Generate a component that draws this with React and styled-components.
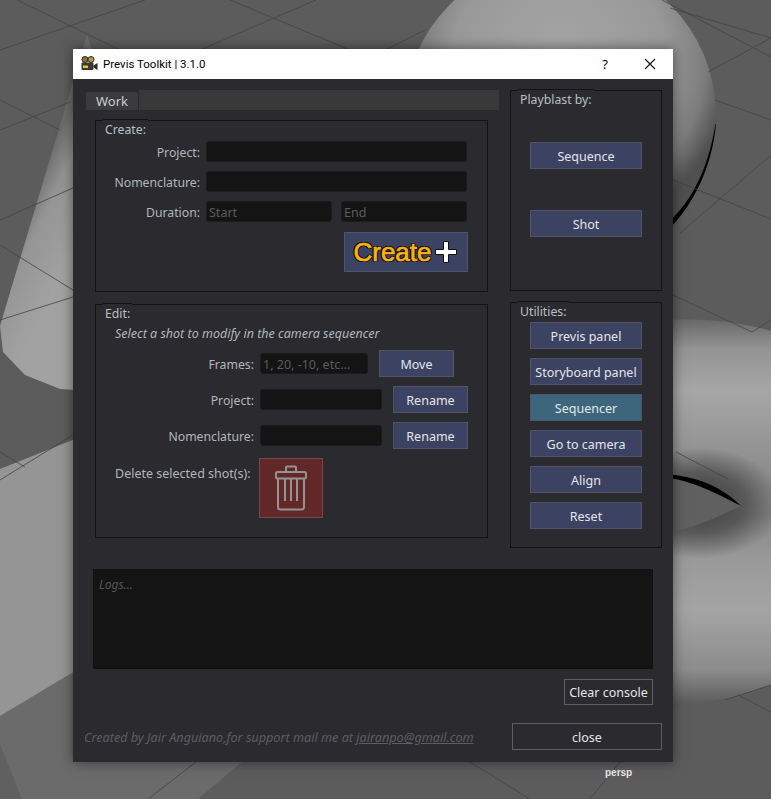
import React from "react";
import styled, { createGlobalStyle } from "styled-components";

const Global = createGlobalStyle`
  html, body { margin: 0; padding: 0; background: #5c5c5c; overflow: hidden; }
  * { box-sizing: border-box; }
`;

const UI_FONT = `"Noto Sans", "Open Sans", "DejaVu Sans", sans-serif`;

const Viewport = styled.div`
  position: relative;
  width: 771px;
  height: 799px;
  overflow: hidden;
  font-family: ${UI_FONT};
  font-size: 12.5px;
`;
const Scene = styled.svg`
  position: absolute;
  inset: 0;
`;
const Persp = styled.span`
  position: absolute;
  left: 605px;
  top: 767px;
  color: #e8e8e8;
  font: bold 10px "Liberation Sans", sans-serif;
`;
const Dialog = styled.div`
  position: absolute;
  left: 73px;
  top: 49px;
  width: 600px;
  height: 713px;
  display: flex;
  flex-direction: column;
  background: #2a2a2f;
  box-shadow: 0 0 12px rgba(0, 0, 0, 0.5);
`;
const TitleBar = styled.header`
  height: 30px;
  flex: none;
  background: #fff;
  display: flex;
  align-items: center;
  padding: 0 0 1px 8px;
  color: #000;
  font-family: Roboto, sans-serif;
  font-size: 11.5px;
`;
const TitleText = styled.span`
  margin-left: 5px;
  flex: 1;
`;
const TitleHelp = styled.span`
  width: 44px;
  text-align: center;
  font-family: ${UI_FONT};
  font-size: 13px;
`;
const TitleClose = styled.span`
  width: 46px;
  display: flex;
  justify-content: center;
`;
const Main = styled.div`
  display: flex;
  padding: 11px 0 0 13px;
  align-items: flex-start;
`;
const LeftCol = styled.div`
  width: 413px;
  flex: none;
`;
const RightCol = styled.div`
  width: 152px;
  margin-left: 11px;
  display: flex;
  flex-direction: column;
  gap: 11px;
`;
const TabBar = styled.div`
  height: 20px;
  display: flex;
  align-items: flex-end;
  background: #39393a;
  box-shadow: inset 53px 0 0 #2a2a2f;
`;
const Tab = styled.div`
  width: 52px;
  height: 18px;
  background: #3b3b3d;
  border-radius: 2px 2px 0 0;
  color: #c6ced2;
  font-size: 13px;
  line-height: 18px;
  padding-left: 10px;
`;
const TabPanel = styled.div`
  padding: 10px 11px 0 9px;
  display: flex;
  flex-direction: column;
  gap: 12px;
`;
const Group = styled.section`
  position: relative;
  height: ${(p) => p.$h}px;
  border: 1px solid #141416;
  padding: ${(p) => p.$pad};
  display: flex;
  flex-direction: column;
  align-items: ${(p) => p.$align || "stretch"};
  gap: ${(p) => p.$gap ?? 9}px;
`;
const GroupTitle = styled.span`
  position: absolute;
  left: 7px;
  top: -2px;
  height: 18px;
  padding: 0 2px;
  border-top: 1px solid #141416;
  background: #2a2a2f;
  color: #b8c0c4;
  font-size: 12.25px;
  line-height: 19px;
`;
const Row = styled.div`
  display: flex;
  align-items: ${(p) => p.$align || "center"};
  gap: ${(p) => p.$gap ?? 6}px;
  min-height: ${(p) => p.$min || 21}px;
`;
const Label = styled.label`
  width: ${(p) => p.$w}px;
  flex: none;
  padding-top: 1px;
  text-align: right;
  color: #b0b8bc;
  font-size: 12.25px;
`;
const Field = styled.input`
  flex: ${(p) => (p.$w ? "none" : "1 1 0")};
  width: ${(p) => (p.$w ? `${p.$w}px` : "0")};
  min-width: 0;
  height: 21px;
  background: #141414;
  border: 1px solid #1b1b1d;
  border-radius: 3px;
  padding: 1px 2px 0;
  font-family: ${UI_FONT};
  font-size: 12.5px;
  color: #ccc;
  outline: none;
  &::placeholder { color: #5c5c5c; opacity: 1; }
`;
const Pair = styled.div`
  flex: 1 1 0;
  min-width: 0;
  display: flex;
  gap: 9px;
`;
const Btn = styled.button`
  width: ${(p) => p.$w || 112}px;
  height: 27px;
  flex: none;
  padding: 1px 0 0;
  margin-left: ${(p) => p.$ml || 0}px;
  background: ${(p) => (p.$teal ? "#3c667c" : "#3b4262")};
  border: 1px solid #50546a;
  color: #e4e6ea;
  font-family: ${UI_FONT};
  font-size: 12.5px;
`;
const GhostBtn = styled.button`
  width: ${(p) => p.$w}px;
  height: ${(p) => p.$h || 27}px;
  padding: ${(p) => (p.$h ? 0 : "1px 0 0")};
  background: transparent;
  border: 1px solid #5e5e62;
  color: #e4e6ea;
  font-family: ${UI_FONT};
  font-size: 12.5px;
`;
const CreateRow = styled.div`
  display: flex;
  justify-content: flex-end;
  margin: 1px -1px 0 0;
`;
const CreateBtn = styled.button`
  width: 124px;
  height: 40px;
  padding: 0 2px 0 0;
  display: flex;
  align-items: center;
  justify-content: center;
  gap: 3px;
  background: #3b4262;
  border: 1px solid #50546a;
  color: #fdb30f;
  font: 400 26px "Liberation Sans", sans-serif;
  -webkit-text-stroke: 0.7px #fdb30f;
  text-shadow: -1.4px 0 #111, 1.4px 0 #111, 0 -1.4px #111, 0 1.4px #111, -1px -1px #111, 1px 1px #111, -1px 1px #111, 1px -1px #111;
`;
const Hint = styled.div`
  height: 18px;
  padding: 1px 0 0 19px;
  margin-bottom: -1px;
  font-style: italic;
  color: #b0b8bc;
  font-size: 12.5px;
  line-height: 18px;
`;
const DeleteLabel = styled.span`
  width: 163px;
  flex: none;
  padding: 7px 0 0 19px;
  color: #b0b8bc;
  font-size: 12.5px;
`;
const TrashBtn = styled.button`
  width: 64px;
  height: 60px;
  padding: 0;
  display: flex;
  align-items: center;
  justify-content: center;
  background: #622828;
  border: 1px solid #70494b;
`;
const Logs = styled.textarea`
  display: block;
  width: 560px;
  height: 100px;
  margin: 21px 0 0 20px;
  resize: none;
  background: #141414;
  border: 1px solid #111;
  padding: 6px 5px;
  outline: none;
  font-family: ${UI_FONT};
  font-size: 12px;
  font-style: italic;
  &::placeholder { color: #565656; opacity: 1; }
`;
const ClearRow = styled.div`
  display: flex;
  justify-content: flex-end;
  margin: 10px 20px 0 0;
  height: 27px;
`;
const Footer = styled.footer`
  display: flex;
  align-items: center;
  justify-content: space-between;
  margin-top: 17px;
  padding: 0 11px;
`;
const Credit = styled.span`
  padding-top: 1px;
  font-style: italic;
  color: #5e5e60;
  font-size: 12.65px;
`;
const Mail = styled.a`
  color: #5e5e60;
  text-decoration: underline;
`;

const CameraIcon = () => (
  <svg width="17" height="15" viewBox="0 0 17 15">
    <circle cx="4" cy="3.5" r="3" fill="#8a7434" stroke="#2a2a20" strokeWidth="1" />
    <circle cx="10" cy="3.5" r="3" fill="#b39a45" stroke="#2a2a20" strokeWidth="1" />
    <rect x="0.5" y="6.5" width="12" height="7.5" rx="1" fill="#3a3a34" />
    <rect x="2" y="9.5" width="5" height="2.5" fill="#f2c230" />
    <path d="M12.5 9.5 L16.5 7 V14 L12.5 11.5 Z" fill="#2a2a2a" />
  </svg>
);
const CloseIcon = () => (
  <svg width="12" height="12" viewBox="0 0 12 12">
    <path d="M1 1 L11 11 M11 1 L1 11" stroke="#111" strokeWidth="1.1" />
  </svg>
);
const PlusIcon = () => (
  <svg width="22" height="22" viewBox="0 0 22 22">
    <path d="M8.5 0.5 H13.5 V8.5 H21.5 V13.5 H13.5 V21.5 H8.5 V13.5 H0.5 V8.5 H8.5 Z" fill="#fff" stroke="#111" strokeWidth="1" strokeLinejoin="round" />
  </svg>
);
const TrashIcon = () => (
  <svg width="34" height="46" viewBox="0 0 34 46" fill="none" stroke="#949494" strokeWidth="2">
    <path d="M12 7 V2.5 Q12 1.5 13 1.5 H21 Q22 1.5 22 2.5 V7" />
    <rect x="2" y="7" width="30" height="6.5" rx="1.5" />
    <path d="M4 13.5 V42 Q4 44.5 6.5 44.5 H27.5 Q30 44.5 30 42 V13.5" />
    <path d="M11 13.5 V36 M17 13.5 V36 M23 13.5 V36" />
  </svg>
);

const GRID = [
  "M17 0 L120 50", "M0 50 L145 0", "M230 0 L350 50", "M200 50 L316 0", "M385 50 L425 30",
  "M662 0 L771 57", "M670 8 L771 38", "M708 72 L771 38", "M715 100 L771 120",
  "M673 180 L771 219", "M680 233 L771 155", "M673 295 L752 332 L771 320",
  "M0 100 L60 130", "M0 130 L70 102", "M0 220 L73 188", "M0 245 L73 290", "M0 320 L73 297",
  "M0 480 L73 435", "M0 452 L25 467", "M196 762 L148 799", "M470 762 L530 799", "M620 762 L590 799",
];

const Background = () => (
  <Scene width="771" height="799" viewBox="0 0 771 799">
    <defs>
      <radialGradient id="sph" gradientUnits="userSpaceOnUse" cx="560" cy="60" r="172">
        <stop offset="0" stopColor="#a6a6a6" />
        <stop offset="0.62" stopColor="#999" />
        <stop offset="0.85" stopColor="#7c7c7c" />
        <stop offset="1" stopColor="#505050" />
      </radialGradient>
      <linearGradient id="tor" gradientUnits="userSpaceOnUse" x1="0" y1="321" x2="0" y2="708">
        <stop offset="0" stopColor="#6a6a6a" />
        <stop offset="0.07" stopColor="#939393" />
        <stop offset="0.18" stopColor="#a6a6a6" />
        <stop offset="0.38" stopColor="#8e8e8e" />
        <stop offset="0.5" stopColor="#868686" />
        <stop offset="0.62" stopColor="#9a9a9a" />
        <stop offset="0.75" stopColor="#a4a4a4" />
        <stop offset="0.9" stopColor="#8c8c8c" />
        <stop offset="1" stopColor="#565656" />
      </linearGradient>
      <radialGradient id="torDark">
        <stop offset="0" stopColor="#303030" stopOpacity="0.85" />
        <stop offset="0.55" stopColor="#303030" stopOpacity="0.55" />
        <stop offset="1" stopColor="#303030" stopOpacity="0" />
      </radialGradient>
      <linearGradient id="cone" gradientUnits="userSpaceOnUse" x1="0" y1="250" x2="60" y2="280">
        <stop offset="0" stopColor="#6c6c6c" />
        <stop offset="0.35" stopColor="#959595" />
        <stop offset="1" stopColor="#a2a2a2" />
      </linearGradient>
    </defs>
    <rect width="771" height="799" fill="#5c5c5c" />
    <polygon points="0,716 73,668 300,668 242,762 198,799 0,799" fill="#6b6b6b" />
    <polygon points="0,744 22,799 0,799" fill="#606060" />
    <path d="M87 35 L0 326 L3 352 L25 375 L60 389 L110 392 L110 100 Z" fill="url(#cone)" />
    <polygon points="0,469 110,425 110,650 0,716" fill="#959595" />
    <circle cx="560" cy="115" r="156" fill="url(#sph)" />
    <path d="M716 124 C712 165 695 205 665 233 L660 229 C690 207 708 170 715.5 124 Z" fill="#000" />
    <path d="M660 321 C700 317 740 322 771 331 L771 685 C750 692 725 700 700 703 L660 708 Z" fill="url(#tor)" />
    <ellipse cx="700" cy="503" rx="82" ry="56" fill="url(#torDark)" />
    <path d="M660 473 C690 475 720 485 741 506 C720 515 695 530 660 533 Z" fill="#606060" />
    <path d="M660 474 C690 475 718 483 741 506 C716 493 690 479 660 477 Z" fill="#000" />
    <g stroke="#444" strokeWidth="0.8" fill="none">
      {GRID.map((d) => <path key={d} d={d} />)}
      <path d="M676 452 L728 479" />
      <path d="M738 695 L771 712" />
      <path d="M725 700 L771 685" />
    </g>
  </Scene>
);

export default function App() {
  return (
    <Viewport>
      <Global />
      <Background />
      <Persp>persp</Persp>
      <Dialog>
        <TitleBar>
          <CameraIcon />
          <TitleText>Previs Toolkit | 3.1.0</TitleText>
          <TitleHelp>?</TitleHelp>
          <TitleClose><CloseIcon /></TitleClose>
        </TitleBar>
        <Main>
          <LeftCol>
            <TabBar><Tab>Work</Tab></TabBar>
            <TabPanel>
              <Group $h={172} $pad="20px 20px 0 0">
                <GroupTitle>Create:</GroupTitle>
                <Row>
                  <Label $w={104}>Project:</Label>
                  <Field />
                </Row>
                <Row>
                  <Label $w={104}>Nomenclature:</Label>
                  <Field />
                </Row>
                <Row>
                  <Label $w={104}>Duration:</Label>
                  <Pair>
                    <Field placeholder="Start" />
                    <Field placeholder="End" />
                  </Pair>
                </Row>
                <CreateRow>
                  <CreateBtn>Create<PlusIcon /></CreateBtn>
                </CreateRow>
              </Group>
              <Group $h={234} $pad="19px 0 0 0">
                <GroupTitle>Edit:</GroupTitle>
                <Hint>Select a shot to modify in the camera sequencer</Hint>
                <Row $min={27}>
                  <Label $w={158}>Frames:</Label>
                  <Field $w={108} placeholder="1, 20, -10, etc..." />
                  <Btn $w={75} $ml={5}>Move</Btn>
                </Row>
                <Row $min={27}>
                  <Label $w={158}>Project:</Label>
                  <Field $w={122} />
                  <Btn $w={75} $ml={5}>Rename</Btn>
                </Row>
                <Row $min={27}>
                  <Label $w={158}>Nomenclature:</Label>
                  <Field $w={122} />
                  <Btn $w={75} $ml={5}>Rename</Btn>
                </Row>
                <Row $align="flex-start" $gap={0}>
                  <DeleteLabel>Delete selected shot(s):</DeleteLabel>
                  <TrashBtn><TrashIcon /></TrashBtn>
                </Row>
              </Group>
            </TabPanel>
          </LeftCol>
          <RightCol>
            <Group $h={201} $pad="51px 0 0 0" $align="center" $gap={41}>
              <GroupTitle>Playblast by:</GroupTitle>
              <Btn>Sequence</Btn>
              <Btn>Shot</Btn>
            </Group>
            <Group $h={246} $pad="19px 0 0 0" $align="center">
              <GroupTitle>Utilities:</GroupTitle>
              <Btn>Previs panel</Btn>
              <Btn>Storyboard panel</Btn>
              <Btn $teal>Sequencer</Btn>
              <Btn>Go to camera</Btn>
              <Btn>Align</Btn>
              <Btn>Reset</Btn>
            </Group>
          </RightCol>
        </Main>
        <Logs readOnly placeholder="Logs..." />
        <ClearRow><GhostBtn $w={89} $h={26}>Clear console</GhostBtn></ClearRow>
        <Footer>
          <Credit>Created by Jair Anguiano,for support mail me at <Mail>jairanpo@gmail.com</Mail></Credit>
          <GhostBtn $w={150}>close</GhostBtn>
        </Footer>
      </Dialog>
    </Viewport>
  );
}
